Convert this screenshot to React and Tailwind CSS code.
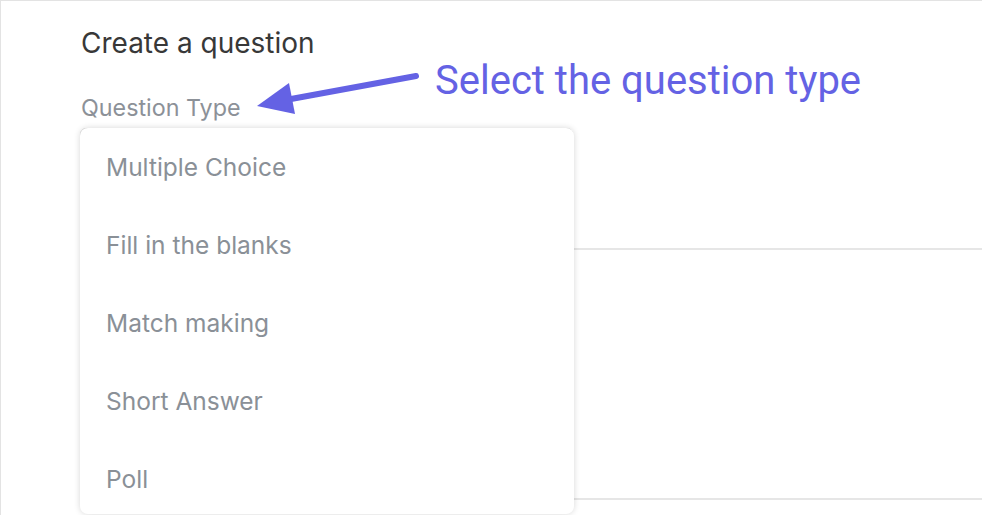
import React from "react";

const items = ["Multiple Choice", "Fill in the blanks", "Match making", "Short Answer", "Poll"];

export default function App() {
  return (
    <div
      className="relative w-[982px] h-[515px] overflow-hidden bg-white border-t border-l border-[#e3e3e3]"
      style={{ fontFamily: "Inter, 'Noto Sans', sans-serif" }}
    >
      <div className="pl-[80px] pt-[24px] flex flex-col">
        <h1 className="text-[28px] leading-[36px] text-[#383838] font-normal">Create a question</h1>
        <div className="mt-[33px] text-[23.3px] leading-[28px] text-[#8c9198]">Question Type</div>
        <div className="mt-[6px] -ml-px h-[44px] w-[493px] border border-[#d9d9d9] rounded-md" />
        <div className="mt-[76px] h-[252px] w-[960px] border-2 border-[#e6e6e6]" />
      </div>

      {/* dropdown menu */}
      <div className="absolute left-[79px] top-[128px] w-[494px] h-[386px] bg-white rounded-lg shadow-[0_0_6px_rgba(0,0,0,0.16)] -mt-px">
        <div className="pt-0">
          {items.map((t) => (
            <div key={t} className="h-[78px] flex items-center pl-[26px] text-[24.5px] text-[#8a9097]">
              {t}
            </div>
          ))}
        </div>
      </div>

      {/* annotation arrow */}
      <svg className="absolute left-0 top-0" width="982" height="515" viewBox="0 0 982 515">
        <line x1="415" y1="75" x2="290" y2="98" stroke="#6462e4" strokeWidth="6" strokeLinecap="round" />
        <polygon points="256,105 288,82 294,113" fill="#6462e4" />
      </svg>
      <div
        className="absolute left-[434px] top-[54px] text-[40px] leading-[52px] text-[#6462e4]"
        style={{ fontFamily: "Roboto, sans-serif" }}
      >
        Select the question type
      </div>
    </div>
  );
}
